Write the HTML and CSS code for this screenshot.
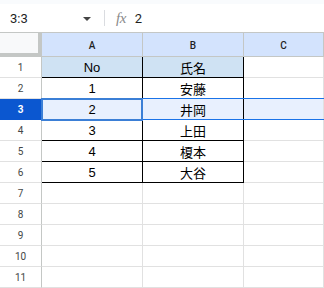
FILE: index.html
```html
<!DOCTYPE html>
<html>
<head>
<meta charset="utf-8">
<link rel="stylesheet" href="styles.css">
</head>
<body>
<div class="topstrip"></div>
<div class="fbar">
  <div class="namebox">3:3</div>
  <svg class="caret" width="8" height="4" viewBox="0 0 8 4"><path d="M0 0 L8 0 L4 4 Z" fill="#444"/></svg>
  <div class="sep"></div>
  <span class="fx">fx</span>
  <span class="fval">2</span>
</div>
<div class="grid">
  <div class="corner"></div>
  <div class="ch">A</div>
  <div class="ch">B</div>
  <div class="ch">C</div>

  <div class="rh">1</div>
  <div class="c hd b">No</div>
  <div class="c hd b">氏名</div>
  <div class="c"></div>

  <div class="rh">2</div>
  <div class="c b">1</div>
  <div class="c b">安藤</div>
  <div class="c"></div>

  <div class="rh sel">3</div>
  <div class="c b rs">2</div>
  <div class="c b rs">井岡</div>
  <div class="c rs"></div>

  <div class="rh">4</div>
  <div class="c b">3</div>
  <div class="c b">上田</div>
  <div class="c"></div>

  <div class="rh">5</div>
  <div class="c b">4</div>
  <div class="c b">榎本</div>
  <div class="c"></div>

  <div class="rh">6</div>
  <div class="c b">5</div>
  <div class="c b">大谷</div>
  <div class="c"></div>

  <div class="rh">7</div><div class="c"></div><div class="c"></div><div class="c"></div>
  <div class="rh">8</div><div class="c"></div><div class="c"></div><div class="c"></div>
  <div class="rh">9</div><div class="c"></div><div class="c"></div><div class="c"></div>
  <div class="rh">10</div><div class="c"></div><div class="c"></div><div class="c"></div>
  <div class="rh">11</div><div class="c"></div><div class="c"></div><div class="c"></div>

  <div class="range"></div>
  <div class="active"></div>
</div>
</body>
</html>
```
FILE: styles.css
```css
html, body {
  margin: 0;
  padding: 0;
  background: #fff;
  overflow: hidden;
}
body {
  width: 324px;
  height: 288px;
  font-family: "Liberation Sans", Arial, "Noto Sans CJK JP", sans-serif;
}
.topstrip {
  height: 4px;
  background: #f9fbfd;
}
.fbar {
  height: 28px;
  display: flex;
  align-items: center;
  background: #fff;
}
.namebox {
  width: 73px;
  padding-left: 10px;
  font-size: 13px;
  color: #1f1f1f;
  font-family: Roboto, "Liberation Sans", sans-serif;
}
.caret {
  display: block;
  margin-top: 1px;
}
.sep {
  width: 1px;
  height: 16px;
  background: #dadce0;
  margin-left: 13px;
  margin-right: 11px;
}
.fx {
  font-family: "Liberation Serif", serif;
  font-style: italic;
  font-size: 15px;
  color: #8a8a8a;
  letter-spacing: -0.5px;
}
.fval {
  font-family: Roboto, "Liberation Sans", sans-serif;
  font-size: 13px;
  color: #1f1f1f;
  margin-left: 9px;
}
.grid {
  position: relative;
  display: grid;
  grid-template-columns: 42px 101px 101px 80px;
  grid-template-rows: 25px;
  grid-auto-rows: 21px;
}
.grid > div {
  box-sizing: border-box;
}
.corner {
  background: #f8f9fa;
  border-top: 1px solid #c4c7c5;
  border-right: 4px solid #c4c7c5;
  border-bottom: 4px solid #c4c7c5;
}
.ch {
  background: #d3e3fd;
  border-top: 1px solid #c4c7c5;
  border-right: 1px solid #c4c7c5;
  border-bottom: 1px solid #c4c7c5;
  display: flex;
  align-items: center;
  justify-content: center;
  font-family: Roboto, "Liberation Sans", sans-serif;
  font-weight: 500;
  font-size: 10px;
  color: #1f1f1f;
  padding-top: 1px;
}
.rh {
  background: #fff;
  border-right: 1px solid #c4c7c5;
  border-bottom: 1px solid #e1e1e1;
  display: flex;
  align-items: center;
  justify-content: center;
  font-family: Roboto, "Liberation Sans", sans-serif;
  font-size: 10px;
  color: #444746;
}
.rh.sel {
  background: #0b57d0;
  color: #fff;
  font-weight: 700;
  border-bottom-color: #0b57d0;
}
.c {
  border-right: 1px solid #e1e1e1;
  border-bottom: 1px solid #e1e1e1;
  display: flex;
  align-items: center;
  justify-content: center;
  font-size: 13px;
  color: #000;
  padding-top: 1px;
}
.c.hd {
  background: #cfe2f3;
}
.c.b {
  border-right-color: #000;
  border-bottom-color: #000;
}
.c.rs {
  background: #e8f0fe;
}
.range {
  position: absolute;
  left: 42px;
  top: 66px;
  width: 282px;
  height: 22px;
  box-sizing: border-box;
  border-top: 1px solid #1a73e8;
  border-bottom: 1px solid #1a73e8;
  pointer-events: none;
}
.active {
  position: absolute;
  left: 41px;
  top: 66px;
  width: 102px;
  height: 23px;
  box-sizing: border-box;
  border: 2px solid #3b7fd6;
  pointer-events: none;
}
```
